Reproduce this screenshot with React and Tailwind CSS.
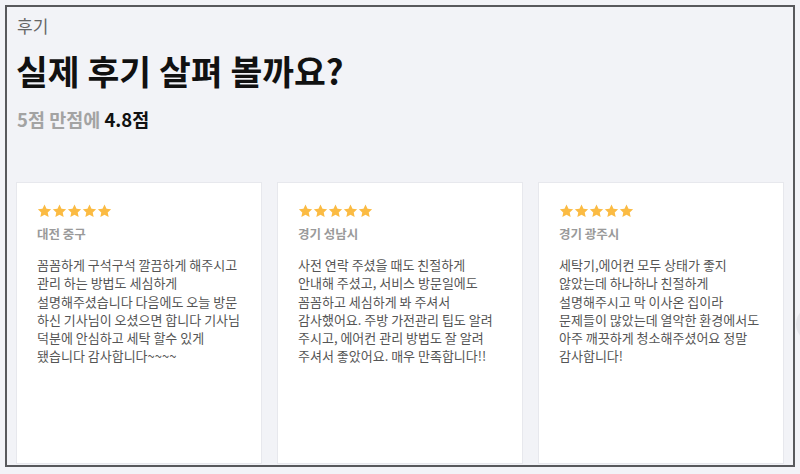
import React from "react";

const reviews = [
  {
    loc: "대전 중구",
    lines: [
      "꼼꼼하게 구석구석 깔끔하게 해주시고",
      "관리 하는 방법도 세심하게",
      "설명해주셨습니다 다음에도 오늘 방문",
      "하신 기사님이 오셨으면 합니다 기사님",
      "덕분에 안심하고 세탁 할수 있게",
      "됐습니다 감사합니다~~~~",
    ],
  },
  {
    loc: "경기 성남시",
    lines: [
      "사전 연락 주셨을 때도 친절하게",
      "안내해 주셨고, 서비스 방문일에도",
      "꼼꼼하고 세심하게 봐 주셔서",
      "감사했어요. 주방 가전관리 팁도 알려",
      "주시고, 에어컨 관리 방법도 잘 알려",
      "주셔서 좋았어요. 매우 만족합니다!!",
    ],
  },
  {
    loc: "경기 광주시",
    lines: [
      "세탁기,에어컨 모두 상태가 좋지",
      "않았는데 하나하나 친절하게",
      "설명해주시고 막 이사온 집이라",
      "문제들이 많았는데 열악한 환경에서도",
      "아주 깨끗하게 청소해주셨어요 정말",
      "감사합니다!",
    ],
  },
];

function Star() {
  return (
    <svg width="15" height="14" viewBox="0 0 24 23" className="shrink-0">
      <path
        d="M12 0.8l3.3 7 7.6 0.9-5.6 5.2 1.5 7.6L12 17.7l-6.8 3.8 1.5-7.6L1.1 8.7l7.6-0.9z"
        fill="#fbbb43"
      />
    </svg>
  );
}

function Card({ loc, lines }) {
  return (
    <div className="w-[246px] shrink-0 h-[282px] bg-white border border-[#e7e8ed] pl-[20px] pt-[21px]">
      <div className="flex h-[14px] items-center">
        <Star />
        <Star />
        <Star />
        <Star />
        <Star />
      </div>
      <div className="mt-[7px] text-[12.5px] leading-[18px] font-semibold text-[#9a9a9a]">{loc}</div>
      <div className="mt-[13px] text-[13px] leading-[18.3px] text-[#555]">
        {lines.map((l, i) => (
          <div key={i} className="whitespace-nowrap">
            {l}
          </div>
        ))}
      </div>
    </div>
  );
}

export default function App() {
  return (
    <div
      className="w-[800px] h-[474px] bg-[#f2f3f7] relative overflow-hidden pt-[5px] pl-[5px]"
      style={{ fontFamily: '"Noto Sans CJK KR", "Noto Sans", sans-serif' }}
    >
      <div className="w-[790px] h-[462px] border-2 border-[#58595c] bg-[#f2f3f7] overflow-hidden pl-[9px] pt-[7px]">
        <div className="pl-[1px] text-[17px] leading-[24px] text-[#666]">후기</div>
        <div className="mt-[10px] text-[34.6px] leading-[44px] font-bold text-[#111]">
          실제 후기 살펴 볼까요?
        </div>
        <div className="mt-[14px] text-[18.5px] leading-[26px] font-bold pl-[1px]">
          <span className="text-[#a3a3a3]">5점 만점에 </span>
          <span className="text-[#111]">4.8점</span>
        </div>
        <div className="mt-[50px] flex gap-[15px]">
          {reviews.map((r, i) => (
            <Card key={i} loc={r.loc} lines={r.lines} />
          ))}
        </div>
      </div>
      <div className="absolute left-[796px] top-[306px] w-[36px] h-[36px] rounded-full bg-[#e4e5ea]"></div>
    </div>
  );
}
